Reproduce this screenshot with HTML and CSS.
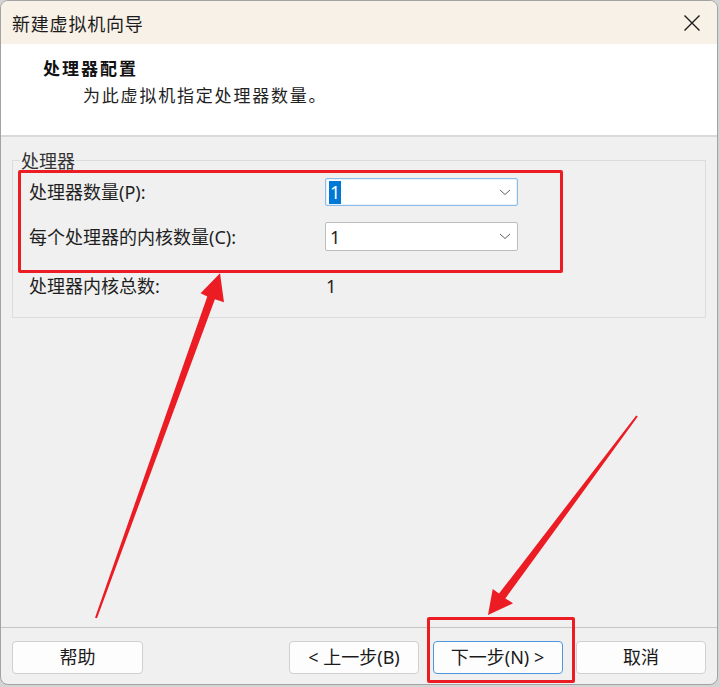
FILE: index.html
```
<!DOCTYPE html>
<html lang="zh-CN">
<head>
<meta charset="utf-8">
<title>新建虚拟机向导</title>
<link rel="stylesheet" href="styles.css">
</head>
<body>
<div class="window">
  <div class="titlebar">
    <span class="title">新建虚拟机向导</span>
    <svg class="close" width="16" height="16" viewBox="0 0 16 16"><path d="M0.5 0.5 L15.5 15.5 M15.5 0.5 L0.5 15.5" stroke="#1c1c1c" stroke-width="1.4" fill="none"/></svg>
  </div>
  <div class="header">
    <div class="h-title">处理器配置</div>
    <div class="h-sub">为此虚拟机指定处理器数量。</div>
  </div>
  <div class="content">
    <fieldset class="group">
      <legend class="legend">处理器</legend>
      <div class="row row-first">
        <span class="label">处理器数量(P):</span>
        <div class="combo focus"><span class="sel">1</span><svg class="chev" width="12" height="7" viewBox="0 0 12 7"><path d="M1 1 L6 5.5 L11 1" stroke="#606060" stroke-width="1" fill="none"/></svg></div>
      </div>
      <div class="row row-second">
        <span class="label">每个处理器的内核数量(C):</span>
        <div class="combo"><span class="val">1</span><svg class="chev" width="12" height="7" viewBox="0 0 12 7"><path d="M1 1 L6 5.5 L11 1" stroke="#606060" stroke-width="1" fill="none"/></svg></div>
      </div>
      <div class="row row-total">
        <span class="label">处理器内核总数:</span>
        <span class="total">1</span>
      </div>
    </fieldset>
  </div>
  <div class="footer">
    <button class="btn">帮助</button>
    <div class="spacer"></div>
    <button class="btn">&lt; 上一步(B)</button>
    <button class="btn primary">下一步(N) &gt;</button>
    <button class="btn">取消</button>
  </div>
  <div class="mark mark-group"></div>
  <div class="mark mark-next"></div>
  <svg class="arrows" width="720" height="687" viewBox="0 0 720 687">
    <polygon fill="#ec1c24" points="95,617.7 207.3,296.4 200.6,293.3 220,273.3 224,302.3 214.9,299.2 97,618.3"/>
    <polygon fill="#ec1c24" points="636.2,415.4 499,593.6 492.7,589 488,615 513,603.3 505.4,598.4 637.8,416.6"/>
  </svg>
</div>
</body>
</html>
```
FILE: styles.css
```
html, body {
  margin: 0;
  padding: 0;
}
body {
  width: 720px;
  height: 687px;
  background: #d4d4d4;
  font-family: "Noto Sans", "Noto Sans CJK SC", sans-serif;
  color: #1c1c1c;
  overflow: hidden;
}
.window {
  position: relative;
  box-sizing: border-box;
  width: 718px;
  height: 685px;
  border: 1px solid #a3a3a3;
  border-radius: 8px;
  overflow: hidden;
  display: flex;
  flex-direction: column;
  background: #f0f0f0;
}
.titlebar {
  height: 43px;
  flex: none;
  background: #f8f1e7;
  display: flex;
  align-items: center;
  justify-content: space-between;
  padding: 0 17px 0 11px;
}
.title {
  font-family: "Noto Sans CJK SC", sans-serif;
  font-size: 18px;
  letter-spacing: 0.8px;
  color: #1b1b1b;
  line-height: 24px;
}
.close {
  display: block;
}
.header {
  flex: none;
  background: #ffffff;
  border-bottom: 2px solid #d9d9d9;
  padding-left: 42px;
  box-sizing: border-box;
  height: 93px;
  padding-top: 12px;
  font-family: "Noto Sans CJK SC", sans-serif;
}
.h-title {
  font-size: 17px;
  font-weight: bold;
  letter-spacing: 2px;
  line-height: 24px;
  color: #111;
}
.h-sub {
  font-size: 17px;
  letter-spacing: 1.8px;
  line-height: 24px;
  margin-top: 3px;
  padding-left: 40px;
  color: #222;
}
.content {
  flex: 1;
  padding: 0 11px;
  border-bottom: 1px solid #c6c6c6;
}
.group {
  margin: 13px 0 0 0;
  padding: 8px 16px 21px 16px;
  border: 1px solid #dcdcdc;
  min-width: 0;
}
.legend {
  padding: 0 1px;
  margin-left: -9px;
  font-family: "Noto Sans CJK SC", sans-serif;
  font-size: 18px;
  line-height: 20px;
  color: #333;
}
.row {
  display: flex;
  align-items: center;
  font-size: 18px;
  line-height: 20px;
  color: #1f1f1f;
}
.row-second {
  margin-top: 16px;
}
.row-total {
  margin-top: 25px;
}
.label {
  width: 296px;
  flex: none;
}
.combo {
  box-sizing: border-box;
  width: 193px;
  height: 28px;
  background: #ffffff;
  border: 1px solid #bdbdbd;
  border-radius: 2px;
  display: flex;
  align-items: center;
  justify-content: space-between;
  padding: 0 6px 0 3px;
}
.row-second .combo {
  height: 29px;
}
.combo.focus {
  border-color: #8bbbe9;
  box-shadow: inset 0 0 0 0.5px #cfe3f7;
}
.sel {
  background: #0078d7;
  color: #ffffff;
  line-height: 23px;
  padding: 0 1px;
  font-size: 18px;
}
.val {
  padding-left: 1px;
  font-size: 18px;
}
.chev {
  display: block;
}
.total {
  padding-left: 1px;
}
.footer {
  height: 56px;
  flex: none;
  display: flex;
  align-items: flex-start;
  gap: 13.5px;
  padding: 13px 11px 0 11px;
  box-sizing: border-box;
}
.spacer {
  flex: 1;
}
.btn {
  box-sizing: border-box;
  width: 130px;
  height: 33px;
  background: #fdfdfd;
  border: 1px solid #d0d0d0;
  border-radius: 4px;
  font-family: "Noto Sans", "Noto Sans CJK SC", sans-serif;
  font-size: 18px;
  color: #1a1a1a;
  padding: 0;
  line-height: 31px;
}
.btn:first-child {
  width: 131px;
}
.btn.primary {
  border-color: #4f97dc;
}
.mark {
  position: absolute;
  box-sizing: border-box;
  border: 3px solid #ec1c24;
  border-radius: 2px;
}
.mark-group {
  left: 17px;
  top: 169px;
  width: 545px;
  height: 103px;
}
.mark-next {
  left: 426px;
  top: 616px;
  width: 148px;
  height: 66px;
}
.arrows {
  position: absolute;
  left: -1px;
  top: -1px;
  pointer-events: none;
}
```
